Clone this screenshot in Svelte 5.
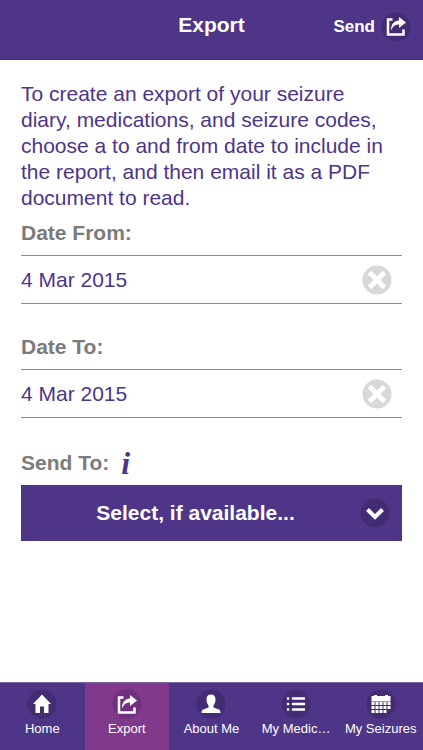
<script>
    let dateFrom = "4 Mar 2015";
    let dateTo = "4 Mar 2015";
    let recipient = "";
    let active = "export";

    const tabs = [
        { id: "home", label: "Home" },
        { id: "export", label: "Export" },
        { id: "about", label: "About Me" },
        { id: "medications", label: "My Medic…" },
        { id: "seizures", label: "My Seizures" },
    ];
</script>

<div class="app">
    <header>
        <h1>Export</h1>
        <button class="send" type="button">
            Send
            <svg class="icon" viewBox="0 0 30 30" aria-hidden="true">
                <circle cx="15" cy="15" r="14.5" />
                <path class="line" d="M11.500 7.500H7V22.500H22.500V17.500" />
                <path class="fill" d="M10 18.500C10 12 13 9 18 8.500V5L25 10.500L18 16V12.500C14 12.500 11.800 14.500 10 18.500Z" />
            </svg>
        </button>
    </header>

    <main>
        <p>To create an export of your seizure diary, medications, and seizure codes, choose a to and from date to include in the report, and then email it as a PDF document to read.</p>

        <div class="field">
            <label for="date-from">Date From:</label>
            <div class="date">
                <input id="date-from" type="text" bind:value={dateFrom}>
                <button type="button" aria-label="Clear date from" on:click={() => (dateFrom = "")}>
                    <svg class="icon clear" viewBox="0 0 30 30" aria-hidden="true">
                        <circle cx="15" cy="15" r="14.5" />
                        <path d="M7.500 7.500L22.500 22.500M22.500 7.500L7.500 22.500" />
                    </svg>
                </button>
            </div>
        </div>

        <div class="field">
            <label for="date-to">Date To:</label>
            <div class="date">
                <input id="date-to" type="text" bind:value={dateTo}>
                <button type="button" aria-label="Clear date to" on:click={() => (dateTo = "")}>
                    <svg class="icon clear" viewBox="0 0 30 30" aria-hidden="true">
                        <circle cx="15" cy="15" r="14.5" />
                        <path d="M7.500 7.500L22.500 22.500M22.500 7.500L7.500 22.500" />
                    </svg>
                </button>
            </div>
        </div>

        <div class="field">
            <div class="label-row">
                <label for="send-to">Send To:</label>
                <button class="info" type="button" title="About recipients">i</button>
            </div>
            <div class="select">
                <select id="send-to" bind:value={recipient}>
                    <option value="">Select, if available...</option>
                </select>
                <svg class="icon arrow" viewBox="0 0 30 30" aria-hidden="true">
                    <circle cx="15" cy="15" r="14.5" />
                    <path class="chevron" d="M7.500 11.500L15 19L22.500 11.500" />
                </svg>
            </div>
        </div>
    </main>

    <nav>
        {#each tabs as tab}
            <a href="#{tab.id}" class:active={active === tab.id} on:click={() => (active = tab.id)}>
                <svg class="icon" viewBox="0 0 30 30" aria-hidden="true">
                    <circle cx="15" cy="15" r="14.5" />
                    {#if tab.id === "home"}
                        <path class="fill" d="M15 5.500L24 15H21.500V24H17V17.500H13V24H8.500V15H6Z" />
                    {:else if tab.id === "export"}
                        <path class="line" d="M11.500 8.500H7V23.500H22.500V18.500" />
                        <path class="fill" d="M10 19.500C10 13 13 10 18 9.500V6L25 11.500L18 17V13.500C14 13.500 11.800 15.500 10 19.500Z" />
                    {:else if tab.id === "about"}
                        <path class="fill" d="M15 5.500C18.200 5.500 19.500 7.500 19.500 10.500C19.500 13.500 18.500 15 17.500 16.500V18.500L23 20.500Q24.500 21.300 24.500 24H5.500Q5.500 21.300 7 20.500L12.500 18.500V16.500C11.500 15 10.500 13.500 10.500 10.500C10.500 7.500 11.800 5.500 15 5.500Z" />
                    {:else if tab.id === "medications"}
                        <path class="list" d="M12 9.500H23M12 15H23M12 20.500H23M7 9.500H7.100M7 15H7.100M7 20.500H7.100" />
                    {:else}
                        <path class="fill" d="M5.500 7H8V6H11V7H19V6H22V7H24.500V12.500H5.500Z" />
                        <path class="days" d="M5.500 14.500H24.500M5.500 18.500H24.500" />
                        <path class="days" d="M5.500 22.500H20.500" />
                    {/if}
                </svg>
                <span>{tab.label}</span>
            </a>
        {/each}
    </nav>
</div>

<style>
    :global(body) {
        margin: 0;
        background: #fff;
    }
    .app {
        display: flex;
        flex-direction: column;
        min-height: 100vh;
        font-family: "Liberation Sans", Arial, sans-serif;
        font-size: 21px;
        line-height: 26px;
        color: #4e3587;
    }
    button {
        padding: 0;
        border: 0;
        background: none;
        color: inherit;
        font: inherit;
        cursor: pointer;
    }
    header {
        display: grid;
        grid-template-columns: 1fr auto 1fr;
        align-items: center;
        box-sizing: border-box;
        height: 60px;
        padding: 0 12px 5px;
        border-bottom: 1px solid #402c78;
        background: #4e3587;
        color: #fff;
    }
    h1 {
        grid-column: 2;
        margin: 0 0 4px;
        font-size: 21px;
    }
    .send {
        display: flex;
        align-items: center;
        justify-self: end;
        gap: 6px;
        font-size: 17px;
        font-weight: bold;
    }
    .icon {
        display: block;
        flex: none;
        width: 30px;
        height: 30px;
        fill: none;
        stroke: none;
    }
    .icon circle {
        fill: #442c74;
    }
    .icon .fill {
        fill: #fff;
    }
    .icon .line {
        stroke: #fff;
        stroke-width: 2.5;
    }
    main {
        flex: 1;
        padding: 21px;
    }
    p {
        margin: 0 0 9px;
        padding-right: 12px;
    }
    .field {
        margin-bottom: 30px;
    }
    label {
        display: block;
        color: #7b7b7b;
        font-weight: bold;
    }
    .date {
        display: flex;
        align-items: center;
        height: 47px;
        margin-top: 9px;
        padding-right: 10px;
        border-top: 1px solid #8c8c8c;
        border-bottom: 1px solid #8c8c8c;
    }
    .date input {
        flex: 1;
        min-width: 0;
        padding: 0;
        border: 0;
        outline: 0;
        background: none;
        color: inherit;
        font: inherit;
    }
    .clear circle {
        fill: #d8d8d8;
    }
    .clear path {
        stroke: #fff;
        stroke-width: 5;
    }
    .label-row {
        display: flex;
        gap: 12px;
        height: 26px;
        padding-top: 2px;
    }
    .info {
        font: italic bold 32px/20px "Liberation Serif", "Times New Roman", serif;
    }
    .select {
        display: grid;
        align-items: center;
        margin-top: 9px;
        background: #4e3587;
    }
    .select select,
    .arrow {
        grid-area: 1 / 1;
    }
    .select select {
        width: 100%;
        height: 56px;
        padding: 0 42px 0 10px;
        border: 0;
        border-radius: 0;
        appearance: none;
        background: none;
        color: #fff;
        font: inherit;
        font-weight: bold;
        text-align: center;
        text-align-last: center;
    }
    .arrow {
        justify-self: end;
        margin-right: 12px;
        pointer-events: none;
    }
    .chevron {
        stroke: #fff;
        stroke-width: 4;
    }
    nav {
        display: grid;
        grid-template-columns: repeat(5, minmax(0, 1fr));
        border-top: 1px solid #7a68a6;
        background: #4e3587;
    }
    nav a {
        display: flex;
        flex-direction: column;
        align-items: center;
        gap: 2px;
        padding: 6px 0 13px;
        color: #fff;
        font-size: 13px;
        line-height: 16px;
        text-decoration: none;
        white-space: nowrap;
    }
    nav .active {
        background: #813a8b;
    }
    .active .icon circle {
        fill: #70317c;
    }
    .list {
        stroke: #fff;
        stroke-width: 2.6;
        stroke-linecap: round;
    }
    .days {
        stroke: #fff;
        stroke-width: 3;
        stroke-dasharray: 3 1;
    }
</style>
